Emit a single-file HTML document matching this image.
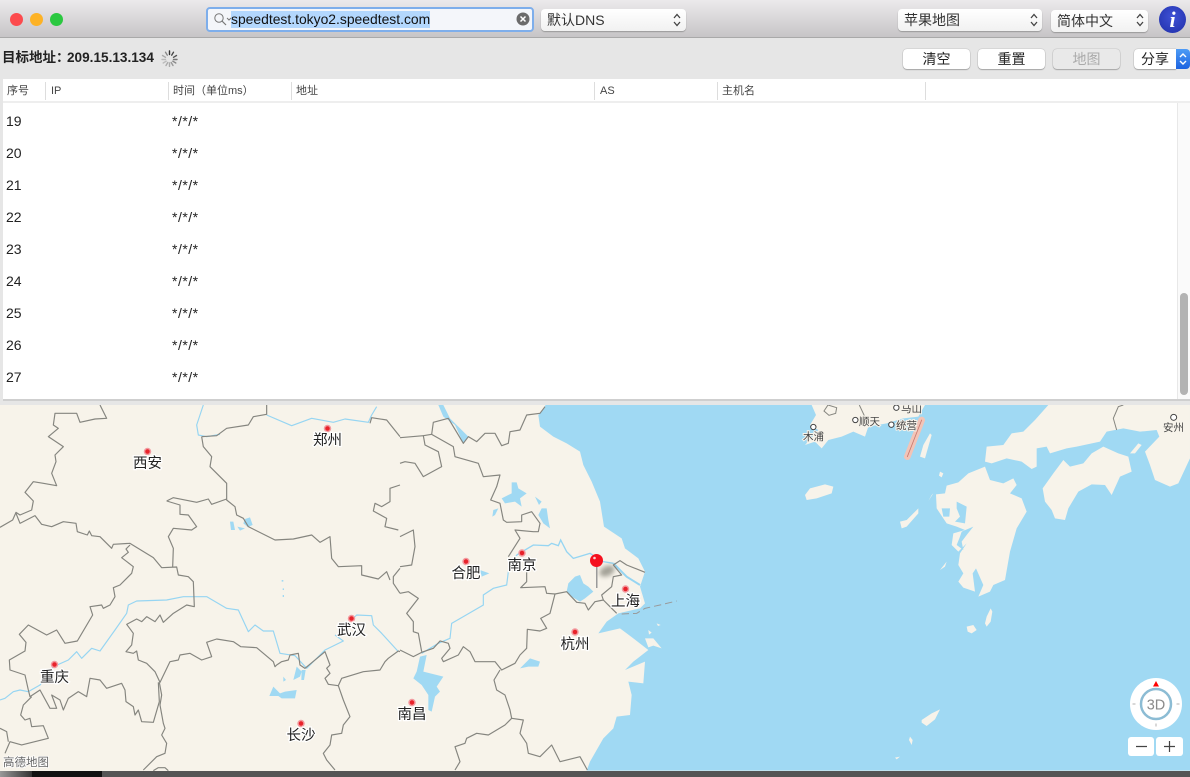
<!DOCTYPE html>
<html><head><meta charset="utf-8">
<style>
html,body{margin:0;padding:0}
body{width:1190px;height:777px;overflow:hidden;position:relative;background:#e6e6e6;font-family:"Liberation Sans","Noto Sans CJK SC",sans-serif;color:#222;filter:blur(.3px)}
.a{position:absolute;white-space:nowrap}
#title{left:0;top:0;width:1190px;height:38px;background:linear-gradient(#ebe9eb,#c6c4c6);border-bottom:1px solid #a9a9a9;box-sizing:border-box}
.light{width:13px;height:13px;border-radius:50%;top:12.500px}
.sel{background:linear-gradient(#fff,#f1f1f1);border-radius:4px;box-shadow:0 1px 1px #999;font-size:14px;color:#333;line-height:22px;height:22px;box-sizing:border-box;padding-left:6px}
.btn{background:#fff;border-radius:4px;box-shadow:0 0 1px #888,0 1px 1px #aaa;font-size:14px;color:#222;line-height:20px;height:20px;text-align:center;top:49px;width:67px}
.th{top:84px;font-size:11px;color:#444;line-height:14px}
.sep{top:82px;width:1px;height:18px;background:#ddd}
.n{left:6px;font-size:14px;color:#222;line-height:16px}
.s{left:172px;font-size:14px;letter-spacing:.5px;color:#222;line-height:16px}
</style></head><body>

<div class="a" id="title"></div>
<div class="a light" style="left:9.500px;background:#fc4a4d"></div>
<div class="a light" style="left:29.500px;background:#fdb225"></div>
<div class="a light" style="left:49.500px;background:#2bc840"></div>

<div class="a" style="left:206px;top:7px;width:328px;height:25px;box-sizing:border-box;background:#f4f6fa;border:2.500px solid #7eaeeb;border-radius:4px"></div>
<svg class="a" style="left:212px;top:11px" width="20" height="18"><circle cx="7" cy="7" r="4.200" fill="none" stroke="#777" stroke-width="1"/><path d="M10 10l4 4" stroke="#777" stroke-width="1.200"/><path d="M15 7l2 2 2-2" fill="none" stroke="#777"/></svg>
<div class="a" style="left:231px;top:11px;width:199px;height:17px;background:#b3d7fd"></div>
<div class="a" style="left:231px;top:10px;font-size:13.900px;line-height:18px;color:#111">speedtest.tokyo2.speedtest.com</div>
<svg class="a" style="left:516px;top:12px" width="14" height="14"><circle cx="7" cy="7" r="6.500" fill="#6b6b6b"/><path d="M4.500 4.500l5 5M9.500 4.500l-5 5" stroke="#fff" stroke-width="1.500"/></svg>

<div class="a sel" style="left:541px;top:9px;width:145px">默认DNS</div>
<div class="a sel" style="left:898px;top:9px;width:144px">苹果地图</div>
<div class="a sel" style="left:1051px;top:10px;width:97px;font-size:14px">简体中文</div>
<svg class="a" style="left:672px;top:12px" width="10" height="16"><path d="M2 6l3-3.500 3 3.500M2 10l3 3.500 3-3.500" fill="none" stroke="#444" stroke-width="1.300"/></svg>
<svg class="a" style="left:1029px;top:12px" width="10" height="16"><path d="M2 6l3-3.500 3 3.500M2 10l3 3.500 3-3.500" fill="none" stroke="#444" stroke-width="1.300"/></svg>
<svg class="a" style="left:1135px;top:12px" width="10" height="16"><path d="M2 6l3-3.500 3 3.500M2 10l3 3.500 3-3.500" fill="none" stroke="#444" stroke-width="1.300"/></svg>
<div class="a" style="left:1159px;top:6px;width:27px;height:27px;border-radius:50%;background:radial-gradient(circle at 50% 40%,#3f51d6,#1f2fa8);color:#fff;font:italic bold 22px/27px 'Liberation Serif',serif;text-align:center">i</div>

<div class="a" style="left:2px;top:49px;font-size:13.500px;line-height:18px;font-weight:bold;color:#222">目标地址：</div>
<div class="a" style="left:67px;top:49px;font-size:13.600px;line-height:18px;font-weight:bold;color:#222">209.15.13.134</div>
<svg class="a" style="left:161px;top:50px" width="17" height="17" stroke="#777" stroke-width="1.400" stroke-linecap="round"><path d="M8.500 1v3.500" stroke="#333"/><path d="M12.500 2.200l-1.800 3" stroke="#444"/><path d="M15.500 5.500l-3 1.800" stroke="#555"/><path d="M16 9.500h-3.500" stroke="#777"/><path d="M14.800 13l-3-1.800" stroke="#888"/><path d="M12 15.500l-1.800-3" stroke="#999"/><path d="M8.500 16.500V13" stroke="#aaa"/><path d="M5 15.500l1.800-3" stroke="#aaa"/><path d="M2.200 13l3-1.800" stroke="#bbb"/><path d="M1 9.500h3.500" stroke="#bbb"/><path d="M1.500 5.500l3 1.800" stroke="#aaa"/><path d="M4.500 2.200l1.800 3" stroke="#888"/></svg>

<div class="a btn" style="left:903px">清空</div>
<div class="a btn" style="left:978px">重置</div>
<div class="a btn" style="left:1053px;background:#e9e9e9;color:#aaa">地图</div>
<div class="a btn" style="left:1134px;width:42px;border-radius:4px 0 0 4px;text-align:left;padding-left:7px;box-sizing:border-box">分享</div>
<div class="a" style="left:1176px;top:49px;width:14px;height:20px;background:linear-gradient(#4d9cf6,#1c63e0);border-radius:0 4px 4px 0"></div>
<svg class="a" style="left:1178px;top:51px" width="10" height="16"><path d="M2 6l3-3 3 3M2 10l3 3 3-3" fill="none" stroke="#fff" stroke-width="1.400"/></svg>

<div class="a" style="left:3px;top:79px;width:1187px;height:320px;background:#fff"></div>
<div class="a" style="left:3px;top:101px;width:1187px;height:2px;background:#eee"></div>
<div class="a th" style="left:7px">序号</div><div class="a sep" style="left:45px"></div>
<div class="a th" style="left:51px">IP</div><div class="a sep" style="left:168px"></div>
<div class="a th" style="left:173px">时间（单位ms）</div><div class="a sep" style="left:291px"></div>
<div class="a th" style="left:296px">地址</div><div class="a sep" style="left:594px"></div>
<div class="a th" style="left:600px">AS</div><div class="a sep" style="left:717px"></div>
<div class="a th" style="left:722px">主机名</div><div class="a sep" style="left:925px"></div>

<div class="a n" style="top:113px">19</div><div class="a s" style="top:113px">*/*/*</div>
<div class="a n" style="top:145px">20</div><div class="a s" style="top:145px">*/*/*</div>
<div class="a n" style="top:177px">21</div><div class="a s" style="top:177px">*/*/*</div>
<div class="a n" style="top:209px">22</div><div class="a s" style="top:209px">*/*/*</div>
<div class="a n" style="top:241px">23</div><div class="a s" style="top:241px">*/*/*</div>
<div class="a n" style="top:273px">24</div><div class="a s" style="top:273px">*/*/*</div>
<div class="a n" style="top:305px">25</div><div class="a s" style="top:305px">*/*/*</div>
<div class="a n" style="top:337px">26</div><div class="a s" style="top:337px">*/*/*</div>
<div class="a n" style="top:369px">27</div><div class="a s" style="top:369px">*/*/*</div>

<div class="a" style="left:1177px;top:103px;width:13px;height:296px;background:#fafafa;border-left:1px solid #e8e8e8;box-sizing:border-box"></div>
<div class="a" style="left:1180px;top:293px;width:8px;height:102px;border-radius:4px;background:#b3b3b3"></div>
<div class="a" style="left:3px;top:399px;width:1187px;height:2px;background:#cfcfcf"></div>

<svg id="map" class="a" style="left:0;top:405px" width="1190" height="366" viewBox="0 405 1190 366">
<defs><filter id="sh" x="-50%" y="-50%" width="200%" height="200%"><feGaussianBlur stdDeviation="2.500"/></filter></defs>
<rect x="0" y="405" width="1190" height="366" fill="#f7f3ea"/>

<g transform="translate(400,395) scale(.33333)">
<path fill="#a0d9f3" d="M437 30L415 60L420 95L460 125L500 145L540 170L550 210L575 260L600 320L612 395L665 430L675 460L715 490L735 530L720 575L735 625L720 640L655 655L620 680L595 715L660 700L700 730L745 765L700 800L675 825L735 800L730 865L685 860L695 900L690 960L650 965L640 1000L610 1030L570 1100L560 1127H2400V30Z"/>
<g fill="#f7f3ea"><path d="M745 705l10 8-8 6zM735 730l25 0 25 30-25-8-15 5zM770 685l12 5-8 3z"/></g>
<g fill="#a0d9f3">
<path d="M335 262L350 262 355 280 380 295 360 310 365 335 345 320 315 325 305 310 335 295Z"/>
<path d="M425 340L440 340 445 375 450 400 430 385 415 360Z"/>
<path d="M405 305L425 320 417 330Z"/>
<path d="M280 345L295 340 285 360 277 365Z"/>
<path d="M500 590L505 565 525 545 540 540 550 565 565 575 580 590 555 610 540 620 515 605Z"/>
<path d="M60 785L80 780 70 830 130 845 110 875 120 890 105 905 95 950 85 945 85 900 65 870 40 850 50 830Z"/>
<path d="M360 820L390 790 420 800 415 815 385 815Z"/>
<path d="M240 525L268 535 245 545Z"/>
<path d="M115 30H130L150 70 205 125 190 145 165 90 130 65Z"/>
</g>
<g fill="none" stroke="#96d5f2" stroke-width="3.500">
<path d="M350 480 400 450 445 452 455 445 475 452 482 435 500 470 520 490 570 475 610 500 640 505" stroke-width="4"/>
<path d="M640 505 680 545 720 570" stroke-width="6"/>
<path d="M350 480 325 530 320 570 280 580 250 600 250 630 190 665 155 685 150 730 115 745 65 775"/>
</g>
<g fill="none" stroke="#85857f" stroke-width="3.500" stroke-linejoin="round">
<path d="M0 128 70 122 75 150 115 170 125 215 70 245 45 205 15 200 0 205"/>
<path d="M70 122 95 118 100 82 145 70 190 145 205 125 230 140 255 115 285 115 305 152 325 145 330 110 360 105 380 60 420 55 435 35"/>
<path d="M95 118 160 155 165 185 235 205 250 245 300 240 290 275 272 315 300 325 310 375 320 382 365 380 365 360 395 350 420 385 415 410 400 410 345 405 360 430 325 485"/>
<path d="M380 520 380 560 362 578 435 575 440 595 465 597 500 590 530 622 555 625 565 645 585 620 610 615 605 600 635 575 640 545 665 540 640 510 660 497 680 510 735 532"/>
<path d="M465 597 450 655 422 670 440 700 420 708 382 703 380 760 360 780 345 805 305 825 285 800 225 800 210 770 190 755 175 780 130 800 125 790 150 760 145 745 120 738 100 760 65 772 40 785 0 765"/>
<path d="M300 825 282 855 290 885 315 900 330 945 335 970 315 990 265 1020 230 1015 200 1030 195 1045 165 1055 180 1100 165 1125"/>
<path d="M335 970 370 975 360 1015 380 1045 385 1075 420 1085 455 1050 480 1100 540 1085 562 1125"/>
<path d="M0 425 40 405 45 455 35 510 0 515"/>
<path d="M0 595 25 590 55 610 20 655 40 680 40 710 55 715 65 770"/>
<path d="M610 615 630 635 650 655"/>
</g>
<path d="M665 657 710 655 735 640 780 630 830 618" fill="none" stroke="#999" stroke-width="3" stroke-dasharray="22 12"/>
</g>

<g transform="translate(790,395) scale(.33333)">
<g fill="#f7f3ea">
<path d="M65 30 78 60 60 90 85 105 45 150 75 140 95 160 115 135 155 125 190 110 225 125 235 95 290 85 340 70 385 65 405 30Z"/>
<path d="M775 30 735 75 700 110 665 115 640 150 590 155 585 200 605 205 650 190 695 200 725 222 740 215 740 160 770 155 780 175 830 160 860 155 930 140 950 110 1000 100 1050 110 1100 105 1108 125 1065 170 1080 210 1095 255 1140 275 1165 265 1200 190V30Z"/>
<path d="M905 175 940 155 985 175 1015 185 1025 230 990 245 965 300 945 270 905 268 865 290 835 340 825 375 795 370 785 345 765 320 758 280 790 235 820 195 840 215 880 205Z"/>
<path d="M535 235 585 215 600 255 640 265 670 250 680 270 660 295 695 310 710 350 680 400 660 470 645 555 610 570 600 590 565 605 580 570 558 520 548 535 555 590 520 578 505 560 520 535 505 510 510 475 530 445 505 470 485 450 490 415 525 405 500 395 470 385 440 340 438 298 465 295 470 272 505 262Z"/>
<path d="M45 300 60 280 105 268 130 275 125 295 80 310 50 315Z"/>
<path d="M330 380 350 375 385 340 385 355 350 395 335 400Z"/>
<path d="M400 150 420 115 425 120 415 155 405 190 390 185Z"/>
<path d="M530 695 550 690 560 705 545 715 533 710ZM590 665 602 640 607 650 602 680 590 695 585 685Z"/>
<path d="M395 975 425 955 450 943 435 973 410 993 395 983ZM360 1025 368 1035 365 1050 357 1035ZM315 1088 330 1085 320 1093ZM430 295 415 318 425 300Z"/>
<path d="M450 230 460 235 455 247 447 242ZM450 525 470 500 465 515ZM1020 175 1045 145 1055 150 1035 175Z"/>
</g>
<g fill="#a0d9f3">
<path d="M500 320 530 335 525 385 495 380 510 365 500 340Z"/>
<path d="M455 340 480 340 478 365 460 365Z"/>
<path d="M515 410 550 395 530 420 515 440 520 465 500 450 510 425Z"/>
</g>
<path d="M980 105 970 70 985 35 1000 30" fill="none" stroke="#85857f" stroke-width="3"/>
<path d="M102 48 114 30 140 38 137 55 117 61Z" fill="none" stroke="#85857f" stroke-width="3"/>
<path d="M208 30 223 62" fill="none" stroke="#85857f" stroke-width="3"/>
<path d="M395 75 352 185" stroke="#f2c4b7" stroke-width="20" stroke-linecap="round"/>
<path d="M395 75 352 185" stroke="#c97a70" stroke-width="2.500" stroke-linecap="round"/>
<g fill="#fff" stroke="#444" stroke-width="3"><circle cx="70" cy="96" r="8"/><circle cx="196" cy="75" r="8"/><circle cx="304" cy="89" r="8"/><circle cx="319" cy="38" r="8"/><circle cx="1151" cy="67" r="9"/></g>
</g>
<g font-family="'Liberation Sans','Noto Sans CJK SC',sans-serif" font-size="10.500" fill="#444" stroke="#f7f3ea" stroke-width="2" paint-order="stroke">
<text x="803" y="440">木浦</text><text x="859" y="425">顺天</text><text x="896" y="429">统营</text><text x="901" y="412">马山</text><text x="1163" y="431">安州</text>
</g>

<g transform="translate(0,395) scale(.33333)">
<g fill="none" stroke="#96d5f2" stroke-width="3.500" stroke-linejoin="round">
<path d="M610 30 590 90 595 120 620 125 660 118"/>
<path d="M800 60 875 92 935 70 1000 82 1035 72 1105 82 1115 60 1130 35"/>
<path d="M0 915 15 910 40 890 60 885 85 890 120 870 160 815 205 795 230 770 245 790 275 760 300 768 345 705 380 655 385 630 410 618 500 615 550 605 620 605 680 640 715 645 745 710 765 690 790 708 820 708 840 775 885 782 920 820 975 765 1030 738 1005 720"/>
<path d="M1055 675 1070 660 1115 662 1120 690 1145 715 1195 770"/>
</g>
<g fill="#a0d9f3">
<path d="M735 372 750 367 758 390 743 396 730 385ZM690 380 700 380 705 405 693 405ZM712 395 735 400 720 407ZM890 815 905 830 900 845 880 855ZM905 825 917 825 912 855 904 855ZM850 845 858 855 850 860ZM820 875 840 895 855 890 890 885 885 910 845 910 835 903 808 903ZM845 555h5v5h-5ZM848 580h4v5h-4ZM848 600h4v6h-4Z"/>
</g>
<g fill="none" stroke="#85857f" stroke-width="3.500" stroke-linejoin="round">
<path d="M300 30 320 70 285 72 240 82 230 55 165 55 160 90 175 100 145 125 190 155 165 180 168 200 155 235 170 272 130 265 100 260 75 292 100 318 95 345 60 360 48 352 38 375 0 397"/>
<path d="M48 355 60 385 105 362 125 388 155 395 190 380 228 385 232 410 262 420 268 408 275 422 300 425 335 460 340 448 390 445 460 488 485 518 530 516 535 540 565 545 580 560 583 635 560 630 520 655 490 682 480 660 465 680 440 665 425 680 410 672 380 688 400 715 395 750 378 770 400 775 410 768 415 795 440 805 465 830 480 862 510 800 535 795 540 780 570 775 605 795 635 785 620 742 650 732 700 740 722 755 770 758 820 800 825 815 830 810 845 800 865 795 870 780 895 775 900 810 915 820 975 770 990 810 980 820 990 835 975 850 985 868 1015 872 1025 850 1090 830 1140 825 1155 800 1165 790 1195 768 1200 770"/>
<path d="M390 450 378 462 385 472 365 488 400 515 395 535 360 570 340 578 345 605 330 630 310 640 305 630 270 635 278 660 232 738 195 745 170 705 140 720 85 690 58 718 78 742 75 768 28 795 30 825 75 840 85 885 90 905 120 885 150 940 170 940 155 900 180 915 190 945 205 910 235 890 260 905 270 850 300 855 320 880 365 865 375 885 378 920 400 935 405 960 415 945 425 980 460 982 478 920 475 862"/>
<path d="M95 905 70 930 62 960 75 975 90 970 95 995 130 992 145 1030 65 1050 30 1040 15 1075"/>
<path d="M0 1000 20 1010 25 1040"/>
<path d="M478 862 485 900 480 930 490 985 495 1000 485 1020 500 1045 495 1075 470 1085 430 1125"/>
<path d="M1015 872 1030 915 1050 965 1030 990 1025 1015 995 1020 990 1050 970 1075 980 1095 1005 1125"/>
<path d="M605 125 610 155 635 185 630 215 680 265 680 315 705 335 710 360 730 370 745 395 825 435 880 432 935 420 960 442 990 425 995 490 1015 515 1085 512 1085 540 1135 552 1160 530 1170 555"/>
<path d="M500 318 520 308 590 322 625 312 635 328 680 312"/>
<path d="M500 318 540 330 540 358 565 360 590 395 575 405 520 400 505 425 520 460 518 516"/>
<path d="M605 125 650 122 680 100 745 90 760 65 800 58 800 30"/>
<path d="M1110 85 1115 68 1160 75 1200 125"/>
<path d="M1200 270 1170 280 1170 320 1145 335 1125 325 1120 348 1160 370 1155 395 1195 405"/>
<path d="M1200 520 1180 545 1180 565 1200 595"/>
<path d="M460 1127 475 1118 495 1118 505 1127"/>
</g>
</g>

<g fill="#e8222a" stroke="#f29ba0" stroke-width="1.500">
<circle cx="147.500" cy="451.500" r="3"/><circle cx="327.500" cy="428.500" r="3"/><circle cx="54.500" cy="664.500" r="3"/><circle cx="351.500" cy="618.500" r="3"/><circle cx="301" cy="723.500" r="3"/><circle cx="412" cy="702.500" r="3"/><circle cx="466" cy="561.500" r="3"/><circle cx="522" cy="553" r="3"/><circle cx="625.500" cy="589" r="3"/><circle cx="575" cy="632" r="3"/>
</g>
<g font-family="'Liberation Sans','Noto Sans CJK SC',sans-serif" font-size="14.500" fill="#222" stroke="#fff" stroke-width="2.500" paint-order="stroke" text-anchor="middle">
<text x="147.500" y="468">西安</text><text x="327.500" y="445">郑州</text><text x="54.500" y="682">重庆</text><text x="351.500" y="635">武汉</text><text x="301" y="740">长沙</text><text x="412" y="719">南昌</text><text x="466" y="578">合肥</text><text x="522" y="570">南京</text><text x="625.500" y="606">上海</text><text x="575" y="649">杭州</text>
</g>
<text x="3" y="766" font-family="'Liberation Sans','Noto Sans CJK SC',sans-serif" font-size="11.500" fill="#666" stroke="#fff" stroke-width="1.500" paint-order="stroke">高德地图</text>

<ellipse cx="607" cy="571" rx="8" ry="5" fill="#77776c" opacity=".65" filter="url(#sh)" transform="rotate(-25 607 571)"/>
<rect x="596" y="562" width="1.500" height="26" fill="#9a9a9a"/>
<circle cx="596.500" cy="560.500" r="6.500" fill="#f5101e"/>
<circle cx="594.500" cy="558" r="1.300" fill="#fff" opacity=".8"/>

<circle cx="1156" cy="704" r="26" fill="#fff"/>
<circle cx="1156" cy="704" r="15" fill="#fff" stroke="#8cbcd4" stroke-width="2.500"/>
<text x="1156" y="709.500" text-anchor="middle" font-family="'Liberation Sans',sans-serif" font-size="14.500" fill="#8a8a8a">3D</text>
<path d="M1153 686.500l3-5.500 3 5.500z" fill="#f00"/>
<path d="M1132.500 704h3M1176.500 704h3M1156 723.500v3" stroke="#ccc" stroke-width="1.500"/>
<rect x="1128" y="737" width="26" height="19" rx="3" fill="#fff"/>
<rect x="1156" y="737" width="27" height="19" rx="3" fill="#fff"/>
<path d="M1136 746.500h11M1164 746.500h11M1169.500 741v11" stroke="#444" stroke-width="1.200"/>
</svg>

<div class="a" style="left:0;top:771px;width:1190px;height:6px;background:#555"></div>
<div class="a" style="left:32px;top:771px;width:70px;height:6px;background:#111"></div>
<div class="a" style="left:0;top:771px;width:32px;height:6px;background:linear-gradient(90deg,#999,#333)"></div>
</body></html>
